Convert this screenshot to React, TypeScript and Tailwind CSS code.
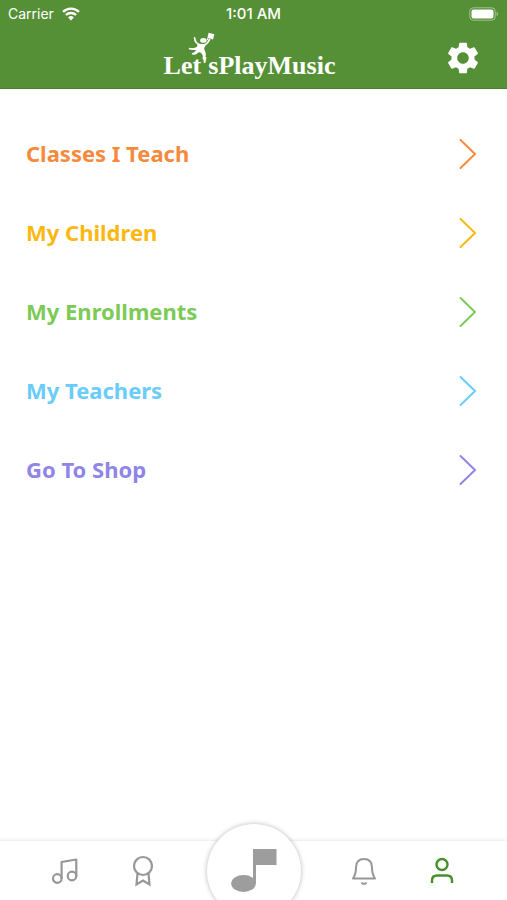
import React from 'react';
import { clsx } from 'clsx';

const MENU = [
  { label: 'Classes I Teach', color: 'text-[#f58a3c]' },
  { label: 'My Children', color: 'text-[#fbb812]' },
  { label: 'My Enrollments', color: 'text-[#7ccb57]' },
  { label: 'My Teachers', color: 'text-[#6accf8]' },
  { label: 'Go To Shop', color: 'text-[#8f85e8]' },
];

// --- Icons ---

function WifiIcon() {
  return (
    <svg viewBox="0 0 18 14" className="w-[18px] h-3.5" fill="none" stroke="currentColor" strokeWidth="2.4">
      <path d="M1 4.8a11.6 11.6 0 0 1 16 0" />
      <path d="M3.9 8a7.4 7.4 0 0 1 10.2 0" />
      <path d="M9 13.4 6.1 10.4a4.2 4.2 0 0 1 5.8 0z" fill="currentColor" stroke="none" />
    </svg>
  );
}

function BatteryIcon() {
  return (
    <svg viewBox="0 0 30 14" className="w-[30px] h-3.5">
      <rect x="0.8" y="0.8" width="25.4" height="12.4" rx="3.4" fill="none" stroke="#fff" strokeOpacity="0.45" />
      <rect x="2.5" y="2.5" width="22" height="9" rx="2" fill="#fff" />
      <path d="M27.6 4.8c1.7.5 1.7 3.9 0 4.4z" fill="#fff" fillOpacity="0.5" />
    </svg>
  );
}

function GearIcon() {
  return (
    <svg viewBox="2 2 20 20" className="w-8 h-8" fill="currentColor">
      <path d="M19.14 12.94c.04-.3.06-.61.06-.94 0-.32-.02-.64-.07-.94l2.03-1.58a.49.49 0 0 0 .12-.61l-1.92-3.32a.488.488 0 0 0-.59-.22l-2.39.96c-.5-.38-1.03-.7-1.62-.94l-.36-2.54a.484.484 0 0 0-.48-.41h-3.84c-.24 0-.43.17-.47.41l-.36 2.54c-.59.24-1.13.57-1.62.94l-2.39-.96c-.22-.08-.47 0-.59.22L2.74 8.87c-.12.21-.08.47.12.61l2.03 1.58c-.05.3-.09.63-.09.94s.02.64.07.94l-2.03 1.58a.49.49 0 0 0-.12.61l1.92 3.32c.12.22.37.29.59.22l2.39-.96c.5.38 1.03.7 1.62.94l.36 2.54c.05.24.24.41.48.41h3.84c.24 0 .44-.17.47-.41l.36-2.54c.59-.24 1.13-.56 1.62-.94l2.39.96c.22.08.47 0 .59-.22l1.92-3.32c.12-.22.07-.47-.12-.61l-2.01-1.58zM12 15.6c-1.98 0-3.6-1.62-3.6-3.6s1.62-3.6 3.6-3.6 3.6 1.62 3.6 3.6-1.62 3.6-3.6 3.6z" />
    </svg>
  );
}

function DancerIcon() {
  return (
    <svg viewBox="0 0 34 32" className="w-[34px] h-8" fill="currentColor">
      <ellipse cx="19.4" cy="10.400" rx="3.2" ry="2.3" />
      {/* flag */}
      <path d="M24.6 2.8 30.400 4.300 29 9.600 24.600 8 23.800 10.300 22.900 10z" />
      {/* arms */}
      <path d="M10.600 8c.3 4 2.700 6.300 6.300 6.900 3.800.6 7-1.400 8.600-5.400" fill="none" stroke="currentColor" strokeWidth="1.8" strokeLinecap="round" />
      {/* body and legs */}
      <path d="M13.5 13.8c3 2 5.500 2 8.700.8-1.400 2.200-2.400 3.300-1.900 4.900.7 1.800 1.600 2.600 1.500 5-.1 2-.8 3.400-1.900 5l-1.400-.5c.7-2.600.4-4.300-1.200-5.800-1.400-1.200-2.700-1.300-4.100.2-1.300 1.200-3 1.500-5.200 1.100l-.2-1.600c2.200-.2 3.200-1 4.200-3-2.400.3-5 .3-7.300-.6l.4-1.600c3.600.6 6.200.2 8-1z" />
    </svg>
  );
}

function ChevronIcon() {
  return (
    <svg viewBox="0 0 18 32" className="w-[18px] h-8" fill="none" stroke="currentColor" strokeWidth="2">
      <path d="M1.5 2 16 16 1.5 30" strokeLinecap="round" />
    </svg>
  );
}

function MusicIcon() {
  return (
    <svg viewBox="0 0 28 28" className="w-7 h-7" fill="none" stroke="currentColor" strokeWidth="2.2">
      <circle cx="6.3" cy="21.5" r="4.3" />
      <circle cx="21" cy="19" r="4.3" />
      <path d="M10.6 21.5V5L25.3 2.5V19" strokeLinejoin="round" />
    </svg>
  );
}

function AwardIcon() {
  return (
    <svg viewBox="0 0 24 32" className="w-6 h-8" fill="none" stroke="currentColor" strokeWidth="2.2">
      <circle cx="12" cy="11" r="9" />
      <path d="M6.5 18.5 5.5 29.5 12 25.5 18.5 29.5 17.5 18.5" />
    </svg>
  );
}

function BellIcon() {
  return (
    <svg viewBox="0 0 26 28" className="w-[26px] h-7" fill="none" stroke="currentColor" strokeWidth="2">
      <path d="M2 21.5C4.5 18 5 15.5 5 10.5 5 5 8 2 13 2s8 3 8 8.5c0 5 .5 7.5 3 11z" strokeLinejoin="round" />
      <path d="M10.5 25.5c1 1.8 4 1.8 5 0" />
    </svg>
  );
}

function PersonIcon() {
  return (
    <svg viewBox="0 0 24 28" className="w-6 h-7" fill="none" stroke="currentColor" strokeWidth="2.4">
      <circle cx="12" cy="7.5" r="5.5" />
      <path d="M2 26v-2.5c0-3.2 2-5 5-5h10c3 0 5 1.8 5 5V26" />
    </svg>
  );
}

function NoteIcon() {
  return (
    <svg viewBox="0 0 46 44" className="w-[46px] h-11" fill="currentColor">
      <ellipse cx="12.5" cy="34.5" rx="12.3" ry="8.5" />
      <path d="M22 0h23.5v16H25v18.5h-3z" />
    </svg>
  );
}

// --- Sections ---

function StatusBar() {
  return (
    <div className="grid grid-cols-3 items-center h-7 px-2 font-[Inter,sans-serif]">
      <div className="flex items-center gap-2 text-sm">
        <span>Carrier</span>
        <WifiIcon />
      </div>
      <span className="text-center font-medium text-[15px]">1:01 AM</span>
      <div className="flex justify-end">
        <BatteryIcon />
      </div>
    </div>
  );
}

function Header() {
  return (
    <header className="bg-[#559036] text-white h-[89px] border-b border-[#4a8030]">
      <StatusBar />
      <div className="grid grid-cols-[1fr_auto_1fr] items-center h-[60px]">
        <div className="relative col-start-2 pr-2">
          <h1 className="font-['Liberation_Serif',serif] font-bold text-[26px] leading-8 pt-4">Let'sPlayMusic</h1>
          <div className="absolute left-5 -top-1">
            <DancerIcon />
          </div>
        </div>
        <button aria-label="Settings" className="justify-self-end mr-7">
          <GearIcon />
        </button>
      </div>
    </header>
  );
}

function TabButton({ label, active, children }: { label: string; active?: boolean; children: React.ReactNode }) {
  return (
    <button
      aria-label={label}
      className={clsx('w-[78px] flex items-center justify-center', active ? 'text-[#46902c]' : 'text-[#979797]')}
    >
      {children}
    </button>
  );
}

export default function App() {
  return (
    <div className="flex flex-col min-h-screen overflow-hidden bg-white font-[Roboto,sans-serif]">
      <Header />

      <main className="flex-1 pt-[25px]">
        {MENU.map(item => (
          <a
            key={item.label}
            href="#"
            className={clsx(
              "flex items-center justify-between h-[79px] pl-[26px] pr-[30px] font-['Noto_Sans',sans-serif] font-bold text-[22px]",
              item.color
            )}
          >
            <span>{item.label}</span>
            <ChevronIcon />
          </a>
        ))}
      </main>

      <nav className="relative flex h-[59px] px-[26px] bg-white shadow-[0_0_4px_rgba(0,0,0,0.14)]">
        <TabButton label="Songs"><MusicIcon /></TabButton>
        <TabButton label="Awards"><AwardIcon /></TabButton>
        <div className="flex-1" />
        <TabButton label="Notifications"><BellIcon /></TabButton>
        <TabButton label="Profile" active><PersonIcon /></TabButton>
        {/* Raised play button, cut off by the bottom edge */}
        <button
          aria-label="Play"
          className="absolute -top-[17px] left-1/2 -translate-x-1/2 size-[94px] rounded-full bg-white text-[#9d9d9d] flex items-center justify-center shadow-[0_0_5px_rgba(0,0,0,0.28)]"
        >
          <NoteIcon />
        </button>
      </nav>
    </div>
  );
}
